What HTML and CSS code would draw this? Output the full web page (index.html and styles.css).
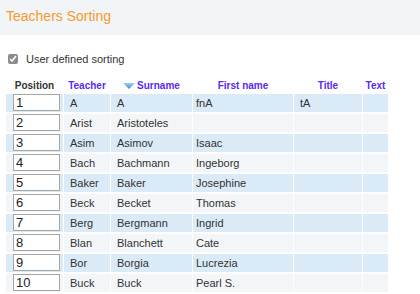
FILE: index.html
```html
<!DOCTYPE html>
<html lang="en">
<head>
    <meta charset="UTF-8">
    <title>Teachers Sorting</title>
    <link rel="stylesheet" href="styles.css">
</head>
<body>
    <div class="page-header">
        <h1>Teachers Sorting</h1>
    </div>

    <div class="options">
        <label><input type="checkbox" checked> User defined sorting</label>
    </div>

    <table class="sort-table">
        <colgroup>
            <col class="c-pos"><col class="c-teacher"><col class="c-surname"><col class="c-first"><col class="c-title"><col class="c-text">
        </colgroup>
        <thead>
            <tr>
                <th class="plain">Position</th>
                <th>Teacher</th>
                <th><svg class="sort-icon" width="12" height="6" viewBox="0 0 12 6"><defs><linearGradient id="g" x1="0" y1="0" x2="0" y2="1"><stop offset="0" stop-color="#a9cdf0"/><stop offset="1" stop-color="#3f86d0"/></linearGradient></defs><path d="M0 0H12L6 6Z" fill="url(#g)"/></svg>Surname</th>
                <th>First name</th>
                <th>Title</th>
                <th>Text</th>
            </tr>
        </thead>
        <tbody>
            <tr><td class="pos"><input type="text" value="1"></td><td>A</td><td>A</td><td class="first">fnA</td><td>tA</td><td></td></tr>
            <tr><td class="pos"><input type="text" value="2"></td><td>Arist</td><td>Aristoteles</td><td class="first"></td><td></td><td></td></tr>
            <tr><td class="pos"><input type="text" value="3"></td><td>Asim</td><td>Asimov</td><td class="first">Isaac</td><td></td><td></td></tr>
            <tr><td class="pos"><input type="text" value="4"></td><td>Bach</td><td>Bachmann</td><td class="first">Ingeborg</td><td></td><td></td></tr>
            <tr><td class="pos"><input type="text" value="5"></td><td>Baker</td><td>Baker</td><td class="first">Josephine</td><td></td><td></td></tr>
            <tr><td class="pos"><input type="text" value="6"></td><td>Beck</td><td>Becket</td><td class="first">Thomas</td><td></td><td></td></tr>
            <tr><td class="pos"><input type="text" value="7"></td><td>Berg</td><td>Bergmann</td><td class="first">Ingrid</td><td></td><td></td></tr>
            <tr><td class="pos"><input type="text" value="8"></td><td>Blan</td><td>Blanchett</td><td class="first">Cate</td><td></td><td></td></tr>
            <tr><td class="pos"><input type="text" value="9"></td><td>Bor</td><td>Borgia</td><td class="first">Lucrezia</td><td></td><td></td></tr>
            <tr><td class="pos"><input type="text" value="10"></td><td>Buck</td><td>Buck</td><td class="first">Pearl S.</td><td></td><td></td></tr>
        </tbody>
    </table>
</body>
</html>
```

FILE: styles.css
```css
body {
    margin: 0;
    font-family: "Liberation Sans", Arial, sans-serif;
    font-size: 11px;
    color: #333;
    background-color: #fff;
}
.page-header {
    background-color: #f2f5f8;
    height: 35px;
    padding-left: 6px;
}
.page-header h1 {
    margin: 0;
    font-size: 14px;
    font-weight: normal;
    line-height: 32px;
    color: #f89a2c;
}
.options {
    padding: 17px 0 0 8px;
    height: 28px;
    box-sizing: border-box;
}
.options label {
    display: flex;
    align-items: center;
    height: 14px;
}
.options input {
    width: 10px;
    height: 10px;
    margin: 0 8px 0 0;
    filter: grayscale(1);
    opacity: 0.75;
}
.sort-table {
    margin: 15px 0 0 5px;
    border-collapse: separate;
    border-spacing: 1px 2px;
    table-layout: fixed;
    width: 384px;
}
.c-pos { width: 57px; }
.c-teacher { width: 46px; }
.c-surname { width: 81px; }
.c-first { width: 100px; }
.c-title { width: 68px; }
.c-text { width: 25px; }
.sort-table th {
    font-size: 10px;
    font-weight: bold;
    color: #5a2af0;
    height: 12px;
    line-height: 12px;
    padding: 0;
    text-align: center;
    white-space: nowrap;
}
.sort-table th.plain {
    color: #333;
}
.sort-icon {
    vertical-align: 0;
    margin-right: 2px;
}
.sort-table td {
    height: 18px;
    padding: 0 6px;
    line-height: 18px;
    white-space: nowrap;
    overflow: hidden;
}
.sort-table td.first {
    padding-left: 3px;
}
.sort-table td.pos {
    padding: 0 0 0 7px;
    vertical-align: top;
}
.sort-table tbody tr:nth-child(odd) td {
    background-color: #daeaf7;
}
.sort-table tbody tr:nth-child(even) td {
    background-color: #f2f6f9;
}
.pos input {
    display: block;
    box-sizing: border-box;
    width: 47px;
    height: 17px;
    margin: 0;
    padding: 0 2px;
    border: 1px solid #a6a6a6;
    font-family: "Liberation Sans", Arial, sans-serif;
    font-size: 13px;
    color: #222;
    background: #fff;
}
```
